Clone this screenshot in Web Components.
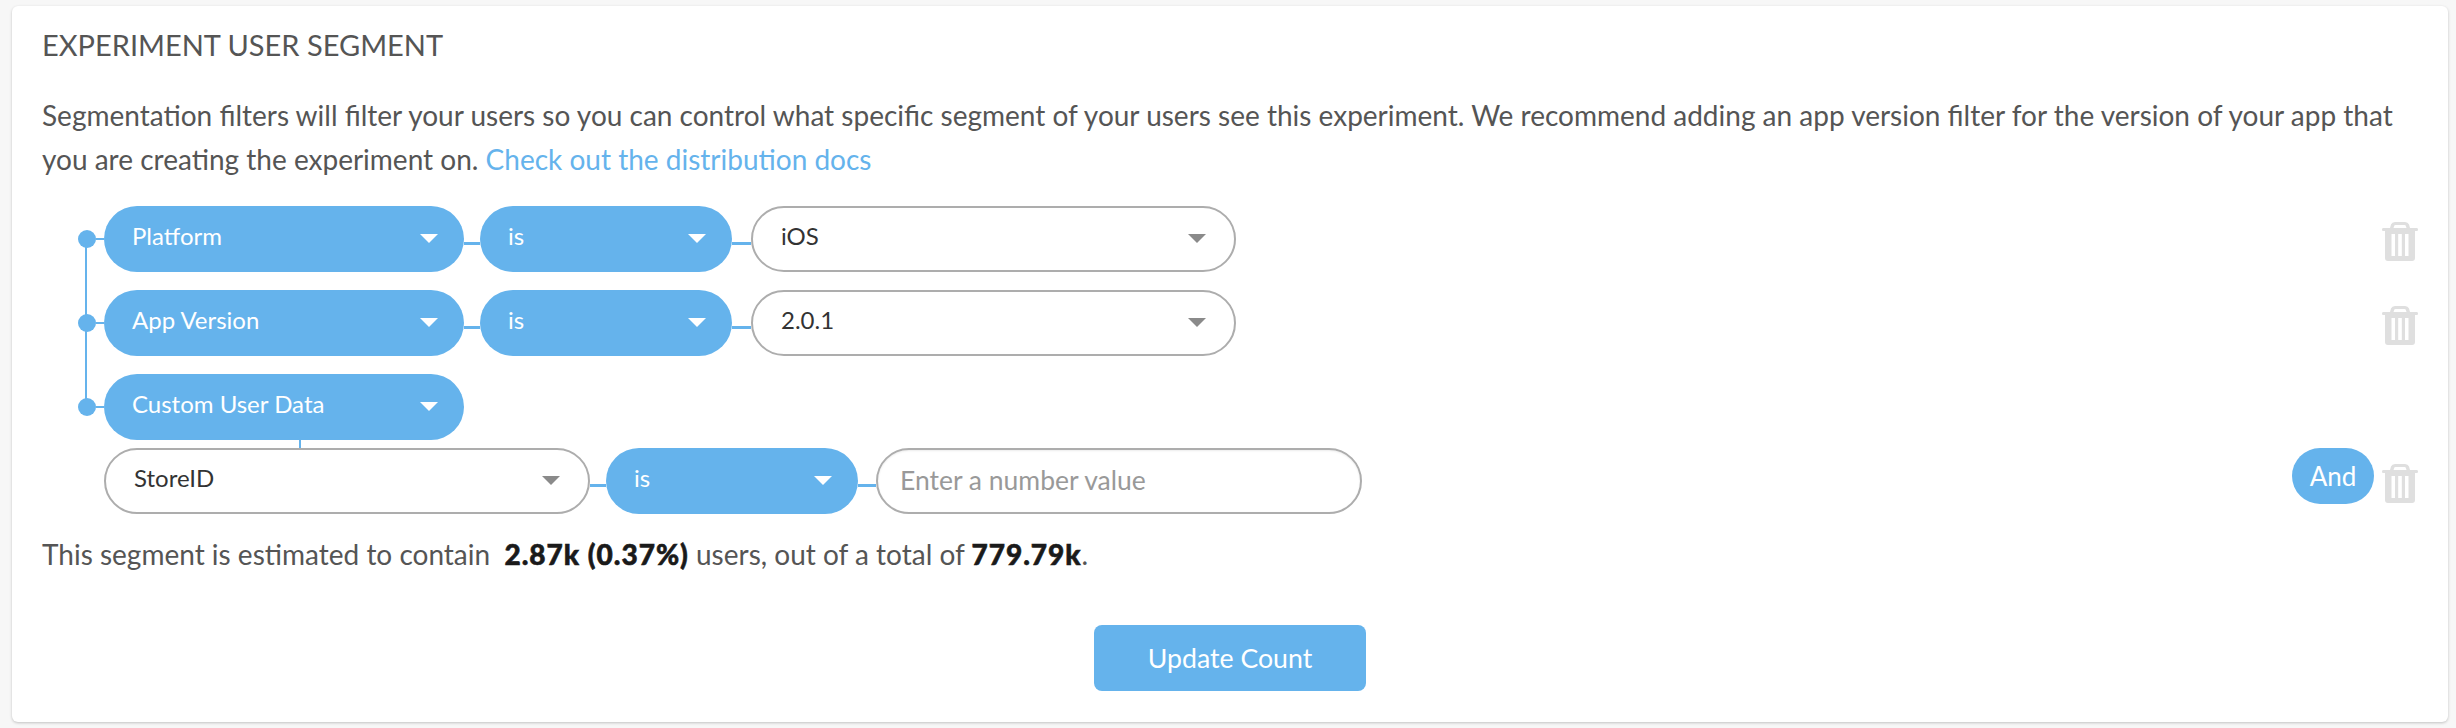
<!DOCTYPE html>
<html>
<head>
<meta charset="utf-8">
<title>Experiment User Segment</title>
<style>
  html, body { margin: 0; background: #f7f7f7; }
  body { font-family: Lato, "Liberation Sans", sans-serif; color: #555; }
</style>
</head>
<body>
<seg-page>
  <seg-card heading="EXPERIMENT USER SEGMENT">
    <seg-intro>Segmentation filters will filter your users so you can control what specific segment of your users see this experiment. We recommend adding an app version filter for the version of your app that<br>you are creating the experiment on. <a href="#">Check out the distribution docs</a></seg-intro>
    <seg-tree>
      <seg-row dot>
        <seg-select kind="filled" width="360" arrow="26">Platform</seg-select>
        <seg-link width="16"></seg-link>
        <seg-select kind="filled" width="252" arrow="26">is</seg-select>
        <seg-link width="19"></seg-link>
        <seg-select kind="outline" width="485">iOS</seg-select>
        <seg-trash slot="end"></seg-trash>
      </seg-row>
      <seg-row dot>
        <seg-select kind="filled" width="360" arrow="26">App Version</seg-select>
        <seg-link width="16"></seg-link>
        <seg-select kind="filled" width="252" arrow="26">is</seg-select>
        <seg-link width="19"></seg-link>
        <seg-select kind="outline" width="485">2.0.1</seg-select>
        <seg-trash slot="end"></seg-trash>
      </seg-row>
      <seg-row dot>
        <seg-select kind="filled" width="360" arrow="26">Custom User Data</seg-select>
      </seg-row>
      <seg-drop></seg-drop>
      <seg-row indent>
        <seg-select kind="outline" width="486">StoreID</seg-select>
        <seg-link width="16"></seg-link>
        <seg-select kind="filled" width="252" arrow="26">is</seg-select>
        <seg-link width="18"></seg-link>
        <seg-input width="486" placeholder="Enter a number value"></seg-input>
        <seg-and slot="end">And</seg-and>
        <seg-trash slot="end"></seg-trash>
      </seg-row>
    </seg-tree>
    <seg-estimate>This segment is estimated to contain&nbsp; <b>2.87k (0.37%)</b> users, out of a total of <b>779.79k</b>.</seg-estimate>
    <seg-button>Update Count</seg-button>
  </seg-card>
</seg-page>

<script>
const BLUE = '#65b3ec';

class SegPage extends HTMLElement {
  constructor() {
    super();
    this.attachShadow({ mode: 'open' }).innerHTML = `
      <style>
        :host { display: block; padding: 6px 8px 6px 12px; height: 716px; }
      </style>
      <slot></slot>`;
  }
}

class SegCard extends HTMLElement {
  constructor() {
    super();
    this.attachShadow({ mode: 'open' });
  }

  connectedCallback() {
    this.shadowRoot.innerHTML = `
      <style>
        :host {
          display: block;
          box-sizing: border-box;
          height: 716px;
          padding: 17px 30px 0;
          background: #fff;
          border-radius: 6px;
          box-shadow: 0 1px 3px rgba(0,0,0,0.22);
        }
        h2 {
          margin: 0 0 26px;
          font: 400 29px/44px Lato, "Liberation Sans", sans-serif;
          color: #555;
        }
      </style>
      <h2>${this.getAttribute('heading')}</h2>
      <slot></slot>`;
  }
}

class SegIntro extends HTMLElement {
  constructor() {
    super();
    this.attachShadow({ mode: 'open' }).innerHTML = `
      <style>
        :host {
          display: block;
          font-size: 28px;
          line-height: 44px;
          color: #555;
          margin-bottom: 25px;
        }
        ::slotted(a) { color: #65b3ec; text-decoration: none; }
      </style>
      <slot></slot>`;
  }
}

class SegTree extends HTMLElement {
  constructor() {
    super();
    this.attachShadow({ mode: 'open' }).innerHTML = `
      <style>
        :host { display: block; position: relative; padding-left: 36px; }
        /* the trunk lies behind the dots */
        .trunk {
          position: absolute;
          left: 43px;
          top: 33px;
          width: 2px;
          height: 168px;
          background: ${BLUE};
        }
      </style>
      <div class="trunk"></div>
      <slot></slot>`;
  }
}

class SegRow extends HTMLElement {
  constructor() {
    super();
    this.attachShadow({ mode: 'open' }).innerHTML = `
      <style>
        :host {
          display: flex;
          align-items: center;
          position: relative;
          height: 66px;
          margin-bottom: 18px;
        }
        :host([indent]) { padding-left: 26px; margin-bottom: 0; }
        :host([dot]) .dot { display: flex; }
        .dot { display: none; align-items: center; width: 26px; flex: none; }
        .dot i { width: 18px; height: 18px; border-radius: 50%; background: ${BLUE}; flex: none; }
        .dot b { width: 8px; height: 2px; background: ${BLUE}; flex: none; }
        .end { margin-left: auto; display: flex; gap: 8px; align-items: flex-start; height: 100%; }
      </style>
      <div class="dot"><i></i><b></b></div>
      <slot></slot>
      <div class="end"><slot name="end"></slot></div>`;
  }
}

class SegLink extends HTMLElement {
  connectedCallback() {
    this.attachShadow({ mode: 'open' }).innerHTML = `
      <style>
        :host {
          display: block;
          flex: none;
          width: ${this.getAttribute('width')}px;
          height: 3px;
          margin-top: 8px;
          background: ${BLUE};
        }
      </style>`;
  }
}

class SegDrop extends HTMLElement {
  constructor() {
    super();
    this.attachShadow({ mode: 'open' }).innerHTML = `
      <style>
        :host {
          display: block;
          width: 2px;
          height: 8px;
          margin: -18px 0 0 221px;
          background: ${BLUE};
        }
      </style>`;
  }
}

class SegSelect extends HTMLElement {
  connectedCallback() {
    const filled = this.getAttribute('kind') === 'filled';
    const arrow = this.getAttribute('arrow') || 28;
    this.attachShadow({ mode: 'open' }).innerHTML = `
      <style>
        :host {
          display: flex;
          flex: none;
          box-sizing: border-box;
          align-items: center;
          justify-content: space-between;
          width: ${this.getAttribute('width')}px;
          height: 66px;
          padding: 0 ${arrow}px 7px 28px;
          border-radius: 33px;
          font-size: 24px;
          background: ${filled ? BLUE : '#fff'};
          color: ${filled ? '#fff' : '#333'};
          border: ${filled ? '0' : '2px solid #adadad'};
        }
        svg { display: block; flex: none; margin-top: 6px; }
      </style>
      <span><slot></slot></span>
      <svg width="18" height="9" viewBox="0 0 18 9"><path d="M0 0h18l-9 9z" fill="${filled ? '#fff' : '#8a8a8a'}"/></svg>`;
  }
}

class SegInput extends HTMLElement {
  connectedCallback() {
    this.attachShadow({ mode: 'open' }).innerHTML = `
      <style>
        :host {
          display: flex;
          flex: none;
          box-sizing: border-box;
          align-items: center;
          width: ${this.getAttribute('width')}px;
          height: 66px;
          padding: 0 22px 3px;
          border: 2px solid #adadad;
          border-radius: 33px;
          font-size: 26.500px;
          color: #999;
          background: #fff;
          box-shadow: inset 0 1px 2px rgba(0,0,0,0.08);
        }
      </style>
      <span>${this.getAttribute('placeholder')}</span>`;
  }
}

class SegAnd extends HTMLElement {
  constructor() {
    super();
    this.attachShadow({ mode: 'open' }).innerHTML = `
      <style>
        :host {
          display: flex;
          align-items: center;
          justify-content: center;
          width: 82px;
          height: 56px;
          border-radius: 28px;
          background: ${BLUE};
          color: #fff;
          font-size: 26px;
        }
      </style>
      <slot></slot>`;
  }
}

class SegTrash extends HTMLElement {
  constructor() {
    super();
    this.attachShadow({ mode: 'open' }).innerHTML = `
      <style>
        :host { display: block; width: 36px; height: 39px; align-self: flex-start; margin-top: 16px; }
        svg { display: block; }
      </style>
      <svg width="36" height="39" viewBox="0 0 36 39">
        <path fill="#dfdfdf" fill-rule="evenodd" d="M8 6l1-3.500Q10 0 13 0h10q3 0 4 2.500L28 6h7q1 0 1 1.500T35 9h-2v27q0 3-3 3H6q-3 0-3-3V9H1Q0 9 0 7.500T1 6zM11.500 6h13l-.7-2.200Q23.500 3 22.500 3h-9q-1 0-1.300.8zM9.500 12v22h3.500V12zM16.200 12v22h3.600V12zM23 12v22h3.500V12z"/>
      </svg>`;
  }
}

class SegEstimate extends HTMLElement {
  constructor() {
    super();
    this.attachShadow({ mode: 'open' }).innerHTML = `
      <style>
        :host { display: block; margin-top: 18px; font-size: 28px; line-height: 44px; color: #555; }
        ::slotted(b) {
          font-weight: 900;
          color: #1a1a1a;
          letter-spacing: 1px;
          -webkit-text-stroke: 0.6px #1a1a1a;
        }
      </style>
      <slot></slot>`;
  }
}

class SegButton extends HTMLElement {
  constructor() {
    super();
    this.attachShadow({ mode: 'open' }).innerHTML = `
      <style>
        :host {
          display: flex;
          align-items: center;
          justify-content: center;
          width: 272px;
          height: 66px;
          margin: 49px auto 0;
          border-radius: 8px;
          background: ${BLUE};
          color: #fff;
          font-size: 26.700px;
        }
      </style>
      <slot></slot>`;
  }
}

customElements.define('seg-page', SegPage);
customElements.define('seg-card', SegCard);
customElements.define('seg-intro', SegIntro);
customElements.define('seg-tree', SegTree);
customElements.define('seg-row', SegRow);
customElements.define('seg-link', SegLink);
customElements.define('seg-drop', SegDrop);
customElements.define('seg-select', SegSelect);
customElements.define('seg-input', SegInput);
customElements.define('seg-and', SegAnd);
customElements.define('seg-trash', SegTrash);
customElements.define('seg-estimate', SegEstimate);
customElements.define('seg-button', SegButton);
</script>
</body>
</html>
